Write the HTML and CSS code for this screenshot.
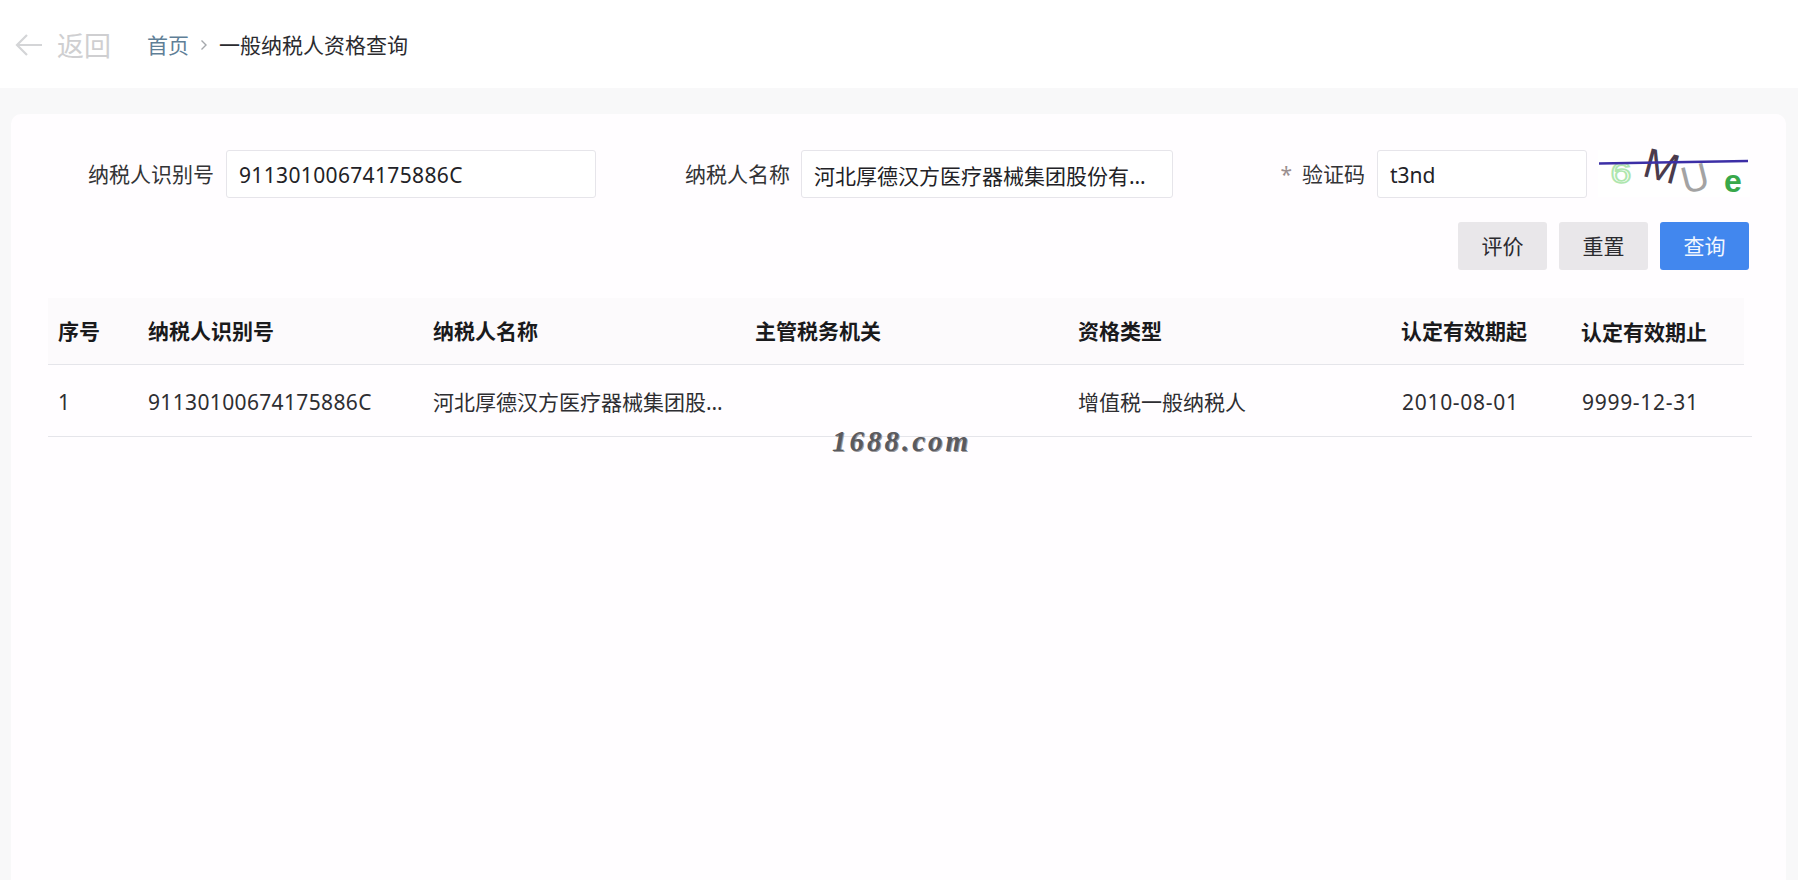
FILE: index.html
```html
<!DOCTYPE html>
<html lang="zh-CN">
<head>
<meta charset="utf-8">
<title>一般纳税人资格查询</title>
<link rel="stylesheet" href="styles.css">
</head>
<body>
<header class="topbar">
  <a class="back" href="#">
    <svg class="back-icon" viewBox="0 0 28 24" aria-hidden="true"><path d="M27 12H2M12 2 2 12l10 10"/></svg>
    <span>返回</span>
  </a>
  <nav class="crumbs">
    <a class="crumb-link" href="#">首页</a>
    <svg class="crumb-sep" viewBox="0 0 8 12" aria-hidden="true"><path d="M1.500 1.500 6 6l-4.500 4.500"/></svg>
    <span>一般纳税人资格查询</span>
  </nav>
</header>
<main class="content">
  <section class="card">
    <form class="form">
      <div class="field field-first">
        <label class="label" for="tin">纳税人识别号</label>
        <input class="input num" id="tin" value="91130100674175886C">
      </div>
      <div class="field">
        <label class="label" for="name">纳税人名称</label>
        <input class="input" id="name" value="河北厚德汉方医疗器械集团股份有限公司">
      </div>
      <div class="field field-last">
        <label class="label" for="code"><span class="req">*</span>验证码</label>
        <div class="captcha-group">
          <input class="input" id="code" value="t3nd">
          <svg class="captcha" viewBox="0 0 152 47" role="img" aria-label="验证码图片">
            <text class="c-a" transform="translate(23 33) scale(1.25 1)">6</text>
            <text class="c-b" transform="translate(60 30) rotate(15)">M</text>
            <text class="c-c" transform="translate(100 41) rotate(-14)">U</text>
            <text class="c-d" transform="translate(135 42)">e</text>
            <path class="c-line" d="M1 13.500 150 11"/>
          </svg>
        </div>
      </div>
    </form>
    <div class="actions">
      <button class="btn" type="button">评价</button>
      <button class="btn" type="button">重置</button>
      <button class="btn btn-primary" type="button">查询</button>
    </div>
    <table class="table">
      <colgroup>
        <col class="col-a"><col class="col-b"><col class="col-c"><col class="col-d"><col class="col-e"><col class="col-f"><col class="col-g">
      </colgroup>
      <thead>
        <tr>
          <th>序号</th><th>纳税人识别号</th><th>纳税人名称</th><th>主管税务机关</th><th>资格类型</th><th>认定有效期起</th><th>认定有效期止</th>
        </tr>
      </thead>
      <tbody>
        <tr>
          <td>1</td><td class="num">91130100674175886C</td><td>河北厚德汉方医疗器械集团股份有限公司</td><td></td><td>增值税一般纳税人</td><td class="date">2010-08-01</td><td class="date">9999-12-31</td>
        </tr>
      </tbody>
    </table>
    <div class="watermark">1688.com</div>
  </section>
</main>
</body>
</html>
```
FILE: styles.css
```css
* { box-sizing: border-box; }
html, body { margin: 0; height: 880px; overflow: hidden; }
body {
  background: #f8f8f9;
  color: #2b2b2f;
  font: 21px/1.4 "Noto Sans", "Noto Sans CJK SC", sans-serif;
}
.topbar {
  height: 88px;
  background: #fff;
  display: flex;
  align-items: center;
  padding: 3px 0 0 15px;
}
.back {
  display: flex;
  align-items: center;
  gap: 14px;
  color: #cfcfd1;
  font-size: 27px;
  text-decoration: none;
  margin-right: 36px;
}
.back-icon { width: 28px; height: 24px; fill: none; stroke: #d4d5d7; stroke-width: 2.200; }
.crumbs { display: flex; align-items: center; gap: 11px; }
.crumb-link { color: #5f7f97; text-decoration: none; }
.crumb-sep { width: 8px; height: 12px; fill: none; stroke: #a5a8ac; stroke-width: 1.400; }
.content { padding: 26px 12px 0 11px; height: 792px; }
.card {
  position: relative;
  height: 100%;
  background: #fffdff;
  border-radius: 10px 10px 0 0;
  padding: 36px 36px 0 8px;
}
.form { display: grid; grid-template-columns: repeat(3, 577px); }
.field { display: grid; grid-template-columns: 1fr 372px; column-gap: 11px; align-items: center; }
.field-first { grid-template-columns: 1fr 370px; column-gap: 12px; }
.field-last { grid-template-columns: 1fr 373px; column-gap: 12px; }
.label { justify-self: end; color: #333336; padding-top: 1px; }
.req { color: #9a8f90; margin-right: 10px; }
.input {
  width: 100%;
  height: 48px;
  padding: 2px 12px 0;
  border: 1px solid #e6e5ea;
  border-radius: 3px;
  background: #fff;
  color: #222226;
  font: inherit;
  text-overflow: ellipsis;
  outline: none;
}
.num { letter-spacing: .35px; }
.captcha-group { display: grid; grid-template-columns: 210px 152px; column-gap: 11px; }
.captcha { width: 152px; height: 47px; background: #fff; display: block; overflow: visible; }
.captcha text { font-family: "Liberation Sans", sans-serif; text-anchor: middle; }
.c-a { font-size: 30px; fill: none; stroke: #aee6ae; stroke-width: 1.600; }
.c-b { font-size: 42px; fill: #4a3b4c; }
.c-c { font-size: 38px; fill: #a3a3a3; }
.c-d { font-size: 32px; font-weight: 700; fill: #38a84a; }
.c-line { stroke: #3c2fa6; stroke-width: 2.500; fill: none; }
.actions { display: flex; justify-content: flex-end; gap: 12px; margin-top: 24px; padding-right: 1px; }
.btn {
  width: 89px;
  height: 48px;
  padding: 2px 0 0;
  border: 0;
  border-radius: 3px;
  background: #e9e7ea;
  color: #2b2b2f;
  font: inherit;
}
.btn-primary { background: #4287ee; color: #f2f7ff; }
.table {
  width: 1704px;
  margin-left: 29px;
  margin-top: 28px;
  border-collapse: separate;
  border-spacing: 0;
  table-layout: fixed;
}
.col-a { width: 90px; }
.col-b { width: 285px; }
.col-c { width: 322px; }
.col-d { width: 323px; }
.col-e { width: 323px; }
.col-f { width: 180px; }
.col-g { width: 181px; }
th, td {
  padding: 0 10px;
  text-align: left;
  white-space: nowrap;
  overflow: hidden;
  text-overflow: ellipsis;
  border-bottom: 1px solid #e5e5ea;
}
th { height: 67px; padding-top: 2px; background: #fcfafc; color: #1a1a1c; font-weight: 700; }
th:last-child {
  border-bottom: 0;
  background:
    linear-gradient(#e5e5ea, #e5e5ea) left bottom / calc(100% - 8px) 1px no-repeat,
    linear-gradient(#fcfafc, #fcfafc) left top / calc(100% - 8px) 100% no-repeat;
}
td { height: 72px; padding-top: 5px; color: #2e2e32; }
td.date { padding-left: 11px; letter-spacing: .7px; }
.watermark {
  position: absolute;
  left: 821px;
  top: 313px;
  color: #5a5a5e;
  font: italic 700 29px/1 "Liberation Serif", serif;
  letter-spacing: 3px;
  text-shadow: 1px 1px 0 #9a9a9e;
}
```
